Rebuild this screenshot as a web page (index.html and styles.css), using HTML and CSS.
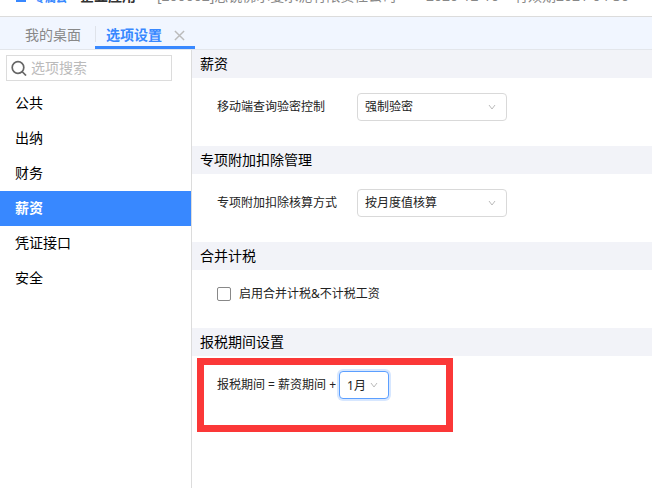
FILE: index.html
```html
<!DOCTYPE html>
<html lang="zh-CN">
<head>
    <meta charset="UTF-8">
    <meta name="viewport" content="width=device-width, initial-scale=1.0">
    <title>选项设置</title>
    <link rel="stylesheet" href="styles.css">
</head>
<body>
    <header class="topbar">
        <span class="topbar-logo"></span>
        <span class="topbar-cloud">专属云</span>
        <span class="topbar-product">企业应用</span>
        <span class="topbar-company">[200002]思锐佛尔曼水泥有限责任公司</span>
        <span class="topbar-date">2020-12-10</span>
        <span class="topbar-expire">有效期2021-04-30</span>
    </header>

    <nav class="tabs">
        <a href="#" class="tab">我的桌面</a>
        <div class="tab tab-active">
            <a href="#">选项设置</a>
            <button type="button" class="tab-close" aria-label="关闭">
                <svg viewBox="0 0 12 12" fill="none" stroke="currentColor" stroke-width="1.6">
                    <path d="M1 1l10 10M11 1L1 11"></path>
                </svg>
            </button>
        </div>
    </nav>

    <div class="layout">
        <aside class="sidebar">
            <label class="search">
                <svg class="search-icon" viewBox="0 0 16 16" fill="none" stroke="currentColor" stroke-width="1.7">
                    <circle cx="7" cy="7.5" r="5.8"></circle>
                    <path d="M11 11.5l4 4"></path>
                </svg>
                <input type="text" placeholder="选项搜索" aria-label="选项搜索">
            </label>
            <ul class="menu">
                <li><a href="#">公共</a></li>
                <li><a href="#">出纳</a></li>
                <li><a href="#">财务</a></li>
                <li><a href="#" class="current">薪资</a></li>
                <li><a href="#">凭证接口</a></li>
                <li><a href="#">安全</a></li>
            </ul>
        </aside>

        <main class="content">
            <section>
                <h2>薪资</h2>
                <div class="row">
                    <label class="row-label" for="verify">移动端查询验密控制</label>
                    <span class="select">
                        <select id="verify"><option>强制验密</option></select>
                        <svg class="arrow" viewBox="0 0 8 6" fill="none" stroke="currentColor"><path d="M1 1l3 4 3-4"></path></svg>
                    </span>
                </div>
            </section>

            <section>
                <h2>专项附加扣除管理</h2>
                <div class="row">
                    <label class="row-label" for="deduct">专项附加扣除核算方式</label>
                    <span class="select">
                        <select id="deduct"><option>按月度值核算</option></select>
                        <svg class="arrow" viewBox="0 0 8 6" fill="none" stroke="currentColor"><path d="M1 1l3 4 3-4"></path></svg>
                    </span>
                </div>
            </section>

            <section>
                <h2>合并计税</h2>
                <div class="row">
                    <label class="check">
                        <input type="checkbox">
                        启用合并计税&amp;不计税工资
                    </label>
                </div>
            </section>

            <section>
                <h2>报税期间设置</h2>
                <div class="highlight">
                    <label for="period">报税期间 = 薪资期间 +</label>
                    <span class="select select-small">
                        <select id="period"><option>1月</option></select>
                        <svg class="arrow" viewBox="0 0 8 6" fill="none" stroke="currentColor"><path d="M1 1l3 4 3-4"></path></svg>
                    </span>
                </div>
            </section>
        </main>
    </div>
</body>
</html>
```

FILE: styles.css
```css
* {
    box-sizing: border-box;
}

body {
    margin: 0;
    min-height: 100vh;
    display: flex;
    flex-direction: column;
    font-family: "Noto Sans", "Noto Sans CJK SC", sans-serif;
    font-size: 12px;
    line-height: 18px;
    color: #222;
    background: #fff;
}

a {
    color: inherit;
    text-decoration: none;
}

input, select, button {
    font: inherit;
    color: inherit;
}

/* 顶部信息栏 */
.topbar {
    display: flex;
    align-items: flex-end;
    height: 17px;
    padding: 0 16px 10px;
    overflow: hidden;
    white-space: nowrap;
    line-height: 20px;
    font-size: 14px;
    color: #888;
    border-bottom: 1px solid #dcdcdc;
}

.topbar-logo {
    width: 10px;
    height: 12px;
    margin: 0 8px 4px 0;
    background: #3888ff;
}

.topbar-cloud {
    width: 46px;
    line-height: 16px;
    font-size: 11px;
    font-weight: bold;
    color: #3888ff;
}

.topbar-product {
    width: 77px;
    font-weight: bold;
    color: #333;
}

.topbar-company {
    width: 269px;
}

.topbar-date {
    width: 88px;
}

/* 页签 */
.tabs {
    display: flex;
    height: 33px;
    padding-left: 11px;
    background: #f1f6ff;
    border-bottom: 1px solid #e3e6eb;
    font-size: 14px;
}

.tab {
    display: flex;
    align-items: center;
    gap: 12px;
    padding: 4px 14px 0;
    color: #888;
}

.tab-active {
    padding: 4px 10px 0 0;
    font-weight: bold;
    color: #3888ff;
    border-bottom: 3px solid #3888ff;
}

.tab-active::before {
    content: "";
    width: 1px;
    height: 16px;
    margin-right: -2px;
    background: #dfe3ea;
}

.tab-active a,
.tab > a {
    padding-top: 3px;
}

.tab-close {
    display: flex;
    padding: 3px 0 0;
    border: 0;
    background: none;
    color: #bbb;
}

.tab-close svg {
    width: 11px;
    height: 11px;
}

.layout {
    display: flex;
    flex: 1;
}

/* 左侧菜单 */
.sidebar {
    width: 192px;
    flex-shrink: 0;
    border-right: 1px solid #dcdcdc;
    font-size: 14px;
    color: #000;
}

.search {
    display: flex;
    align-items: center;
    height: 26px;
    margin: 5px 19px 5px 6px;
    padding-left: 4px;
    gap: 4px;
    border: 1px solid #dcdcdc;
}

.search-icon {
    width: 16px;
    height: 16px;
    flex-shrink: 0;
    color: #666;
}

.search input {
    flex: 1;
    min-width: 0;
    padding: 0;
    border: 0;
    outline: 0;
    background: none;
}

.search input::placeholder {
    color: #bbb;
}

.menu {
    list-style: none;
    margin: 0;
    padding: 0;
}

.menu a {
    display: block;
    padding: 0 15px 2px;
    line-height: 33px;
}

.menu .current {
    background: #3888ff;
    color: #fff;
    font-weight: bold;
}

/* 右侧选项 */
.content {
    flex: 1;
    min-width: 0;
}

h2 {
    margin: 0;
    padding-left: 8px;
    font-size: 14px;
    font-weight: normal;
    line-height: 28px;
    color: #000;
    background: #f2f3f8;
}

.row {
    display: flex;
    align-items: center;
    padding: 15px 25px 25px;
}

.row-label {
    width: 140px;
}

.select {
    position: relative;
    width: 150px;
}

.select select {
    display: block;
    width: 100%;
    height: 28px;
    padding: 0 7px;
    appearance: none;
    border: 1px solid #d9d9d9;
    border-radius: 4px;
    outline: 0;
    background: #fff;
}

.arrow {
    position: absolute;
    top: 11px;
    right: 11px;
    width: 8px;
    height: 6px;
    color: #bbb;
    pointer-events: none;
}

.check {
    display: flex;
    align-items: center;
    gap: 8px;
}

.check input {
    width: 14px;
    height: 14px;
    margin: 0;
    appearance: none;
    border: 1px solid #888;
    border-radius: 2px;
    background: #fff;
}

.check input:checked {
    background: #3888ff;
}

.highlight {
    display: flex;
    align-items: flex-start;
    gap: 3px;
    width: 256px;
    max-width: 100%;
    min-height: 74px;
    margin: 2px 5px;
    padding: 6px 13px;
    border: 7px solid #fb3838;
    line-height: 28px;
}

.select-small {
    width: 50px;
}

.select-small select {
    border-color: #5c9fff;
    box-shadow: 0 0 0 2px #d7e7ff;
}
```
